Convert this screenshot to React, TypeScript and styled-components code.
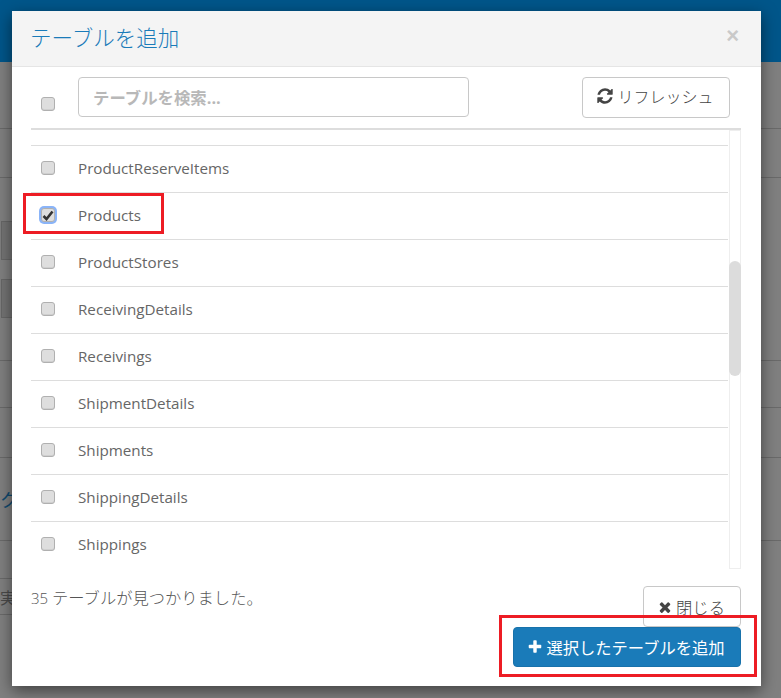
import React from "react";
import styled, { createGlobalStyle } from "styled-components";

const FONT = `"Open Sans", "Noto Sans CJK JP", sans-serif`;

const Global = createGlobalStyle`
  html, body { margin: 0; padding: 0; background: #808080; }
  * { box-sizing: border-box; }
`;

const Page = styled.div`
  position: relative;
  width: 781px;
  height: 698px;
  overflow: hidden;
  background: #808080;
  font-family: ${FONT};
`;

const TopBar = styled.div`
  height: 62px;
  background: #00568a;
`;

const BackRow = styled.div<{ $h: number; $short?: boolean }>`
  height: ${(p) => p.$h}px;
  border-bottom: 1px solid ${(p) => (p.$short ? "transparent" : "#6a6a6a")};
  display: flex;
  flex-direction: column;
  justify-content: center;
  gap: 19px;
  position: relative;
  font-size: 16px;
  color: #4a4a4a;
  ${(p) => (p.$short ? "width: 40px; border-bottom-color: #6a6a6a;" : "")}
`;

const BackBox = styled.div`
  margin-left: 1px;
  width: 60px;
  height: 39px;
  background: #747474;
  border: 1px solid #676767;
`;

const BackLink = styled.span`
  color: #0f4a70;
  font-size: 18px;
  margin-left: 0;
`;

const Modal = styled.div`
  position: absolute;
  left: 12px;
  top: 11px;
  width: 749px;
  height: 675px;
  background: #fff;
  box-shadow: 0 5px 15px rgba(0, 0, 0, 0.5);
  display: flex;
  flex-direction: column;
`;

const Header = styled.div`
  height: 56px;
  flex: none;
  background: #f4f4f4;
  border-bottom: 1px solid #e5e5e5;
  padding: 0 19px;
  display: flex;
  align-items: center;
  justify-content: space-between;
`;

const Title = styled.h4`
  margin: -1px 0 0 -1px;
  font-size: 21.5px;
  font-weight: 300;
  line-height: 56px;
  color: #1a7bb9;
`;

const CloseX = styled.span`
  font-family: "Liberation Sans", sans-serif;
  font-size: 22px;
  font-weight: 700;
  color: #c9c9c9;
  margin-right: 3px;
  margin-top: -5px;
`;

const Body = styled.div`
  flex: 1;
  padding: 10px 20px 19px 19px;
  display: flex;
  flex-direction: column;
`;

const SearchRow = styled.div`
  display: grid;
  grid-template-columns: 47px 391px 1fr;
  align-items: start;
  border-bottom: 2px solid #dddddd;
  height: 53px;
`;

const HeadCheck = styled.div`
  padding: 17px 0 0 10px;
`;

const SearchInput = styled.input`
  width: 391px;
  height: 40px;
  border: 1px solid #c8c8c8;
  border-radius: 4px;
  padding: 0 14px 0;
  font: 700 16.4px ${FONT};
  outline: none;
  &::placeholder { color: #b8b8b8; opacity: 1; }
`;

const RefreshButton = styled.button`
  justify-self: end;
  width: 148px;
  height: 41px;
  margin-right: 11px;
  background: #fff;
  border: 1px solid #c8c8c8;
  border-radius: 4px;
  font: 300 16px ${FONT};
  color: #444;
  display: flex;
  align-items: center;
  justify-content: center;
  gap: 3px;
  padding: 0 2px 3px 0;
`;

const ListArea = styled.div`
  display: flex;
  height: 439px;
  flex: none;
`;

const List = styled.ul`
  flex: 1;
  margin: 0;
  padding: 0;
  list-style: none;
  overflow: hidden;
`;

const CutRow = styled.li`
  height: 16px;
  border-bottom: 1px solid #dddddd;
`;

const Row = styled.li`
  height: 47px;
  border-bottom: 1px solid #dddddd;
  display: flex;
  align-items: center;
  padding: 0 0 2px 10px;
  font-size: 15.2px;
  color: #666;
  &:last-child { border-bottom: none; padding-bottom: 3px; }
`;

const RowName = styled.span`
  margin-left: 23px;
`;

const Track = styled.div`
  flex: none;
  width: 12px;
  margin-left: 1px;
  border: 1px solid #eeeeee;
  position: relative;
`;

const Thumb = styled.div`
  width: 12px;
  height: 115px;
  margin: 130px 0 0 -1px;
  background: #dcdcdc;
  border-radius: 6px;
`;

const Box = styled.span<{ $checked?: boolean }>`
  display: inline-flex;
  align-items: center;
  justify-content: center;
  flex: none;
  width: 14px;
  height: 14px;
  background: #dedede;
  border: 1px solid #b0b0b0;
  border-radius: 3px;
  box-shadow: ${(p) => (p.$checked ? "0 0 0 2px #8ab4f8" : "inset 0 -1px 0 #cfcfcf")};
  color: #333;
`;

const Footer = styled.div`
  flex: 1;
  display: flex;
  justify-content: space-between;
  padding-top: 17px;
`;

const Count = styled.span`
  font-size: 15px;
  font-weight: 300;
  color: #555;
  line-height: 24px;
`;

const CountJa = styled.span`
  font-size: 16.3px;
`;

const Actions = styled.div`
  display: flex;
  flex-direction: column;
  align-items: flex-end;
`;

const CloseButton = styled.button`
  width: 98px;
  height: 41px;
  background: #fff;
  border: 1px solid #c8c8c8;
  border-radius: 4px;
  font: 300 16.3px ${FONT};
  color: #444;
  display: flex;
  align-items: center;
  justify-content: center;
  gap: 3px;
  padding: 0 2px 0 0;
`;

const AddButton = styled.button`
  width: 228px;
  height: 40px;
  background: #1a7bb9;
  border: 1px solid #1872ab;
  border-radius: 4px;
  font: 400 16.3px ${FONT};
  color: #fff;
  display: flex;
  align-items: center;
  justify-content: center;
  gap: 3px;
  padding: 0 2px 0 0;
`;

const Callout = styled.div<{ $l: number; $t: number; $w: number; $h: number }>`
  position: absolute;
  left: ${(p) => p.$l}px;
  top: ${(p) => p.$t}px;
  width: ${(p) => p.$w}px;
  height: ${(p) => p.$h}px;
  border: 3px solid #ed1c24;
  pointer-events: none;
`;

const Fa = ({ d, size = 14 }: { d: string; size?: number }) => (
  <svg width={size} height={size} viewBox="0 0 1792 1792" fill="currentColor">
    <path d={d} />
  </svg>
);

const REFRESH =
  "M1639 1056q0 5-1 7-64 268-268 434.5t-478 166.5q-146 0-282.5-55t-243.5-157l-129 129q-19 19-45 19t-45-19-19-45v-448q0-26 19-45t45-19h448q26 0 45 19t19 45-19 45l-137 137q71 66 161 102t187 36q134 0 250-65t186-179q11-17 53-117 8-23 30-23h192q13 0 22.5 9.5t9.5 22.5zm25-800v448q0 26-19 45t-45 19h-448q-26 0-45-19t-19-45 19-45l138-138q-148-137-349-137-134 0-250 65t-186 179q-11 17-53 117-8 23-30 23h-199q-13 0-22.5-9.5t-9.5-22.5v-7q65-268 270-434.5t480-166.5q146 0 284 55.5t245 156.5l130-129q19-19 45-19t45 19 19 45z";
const TIMES =
  "M1490 1322q0 40-28 68l-136 136q-28 28-68 28t-68-28l-294-294-294 294q-28 28-68 28t-68-28l-136-136q-28-28-28-68t28-68l294-294-294-294q-28-28-28-68t28-68l136-136q28-28 68-28t68 28l294 294 294-294q28-28 68-28t68 28l136 136q28 28 28 68t-28 68l-294 294 294 294q28 28 28 68z";
const PLUS =
  "M1600 736v192q0 40-28 68t-68 28h-416v416q0 40-28 68t-68 28h-192q-40 0-68-28t-28-68v-416h-416q-40 0-68-28t-28-68v-192q0-40 28-68t68-28h416v-416q0-40 28-68t68-28h192q40 0 68 28t28 68v416h416q40 0 68 28t28 68z";

const TABLES = [
  "ProductReserveItems",
  "Products",
  "ProductStores",
  "ReceivingDetails",
  "Receivings",
  "ShipmentDetails",
  "Shipments",
  "ShippingDetails",
  "Shippings",
];

export default function App() {
  return (
    <Page>
      <Global />
      <TopBar />
      <BackRow $h={67} />
      <BackRow $h={49} />
      <BackRow $h={183}>
        <BackBox />
        <BackBox />
      </BackRow>
      <BackRow $h={47} />
      <BackRow $h={50} />
      <BackRow $h={83}>
        <BackLink>ク</BackLink>
      </BackRow>
      <BackRow $h={38} $short />
      <BackRow $h={36} $short>
        実
      </BackRow>

      <Modal>
        <Header>
          <Title>テーブルを追加</Title>
          <CloseX>×</CloseX>
        </Header>
        <Body>
          <SearchRow>
            <HeadCheck>
              <Box />
            </HeadCheck>
            <SearchInput placeholder="テーブルを検索..." readOnly />
            <RefreshButton>
              <Fa d={REFRESH} size={18} />
              リフレッシュ
            </RefreshButton>
          </SearchRow>
          <ListArea>
            <List>
              <CutRow />
              {TABLES.map((name) => (
                <Row key={name}>
                  <Box $checked={name === "Products"}>
                    {name === "Products" && (
                      <svg width="12" height="11" viewBox="0 0 12 11" fill="none">
                        <path d="M1.5 6 L4.5 9 L10.5 1.5" stroke="currentColor" strokeWidth="2.6" />
                      </svg>
                    )}
                  </Box>
                  <RowName>{name}</RowName>
                </Row>
              ))}
            </List>
            <Track>
              <Thumb />
            </Track>
          </ListArea>
          <Footer>
            <Count>
              35 <CountJa>テーブルが見つかりました。</CountJa>
            </Count>
            <Actions>
              <CloseButton>
                <Fa d={TIMES} size={16} />
                閉じる
              </CloseButton>
              <AddButton>
                <Fa d={PLUS} size={16} />
                選択したテーブルを追加
              </AddButton>
            </Actions>
          </Footer>
        </Body>
      </Modal>
      <Callout $l={23} $t={193} $w={141} $h={41} />
      <Callout $l={499} $t={615} $w={258} $h={62} />
    </Page>
  );
}
